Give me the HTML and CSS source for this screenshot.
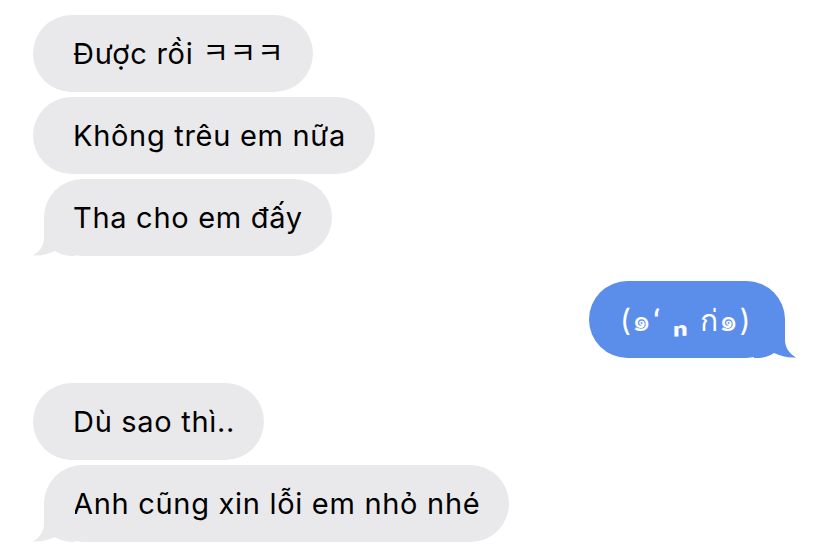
FILE: index.html
```html
<!DOCTYPE html>
<html lang="vi">
<head>
<meta charset="utf-8">
<link rel="stylesheet" href="styles.css">
</head>
<body>
<div class="chat">
  <div class="group in">
    <div class="bubble">Được rồi ㅋㅋㅋ</div>
    <div class="bubble">Không trêu em nữa</div>
    <div class="bubble tail">Tha cho em đấy<svg class="tail-svg" viewBox="0 0 42 40" width="42" height="40"><path d="M11,0 L11,22 C11,30 6,36 0,39.5 C8,40 16,38 22,35 C28,39 34,40 42,40 L42,0 Z"/></svg></div>
  </div>
  <div class="group out">
    <div class="bubble blue tail"><span class="kao">(๑ʻ <span class="mouth">ₙ</span> ก่๑)</span><svg class="tail-svg" viewBox="0 0 42 40" width="42" height="40"><path d="M31,0 L31,22 C31,30 36,36 42,39.5 C34,40 26,38 20,35 C14,39 8,40 0,40 L0,0 Z"/></svg></div>
  </div>
  <div class="group in">
    <div class="bubble">Dù sao thì..</div>
    <div class="bubble tail">Anh cũng xin lỗi em nhỏ nhé<svg class="tail-svg" viewBox="0 0 42 40" width="42" height="40"><path d="M11,0 L11,22 C11,30 6,36 0,39.5 C8,40 16,38 22,35 C28,39 34,40 42,40 L42,0 Z"/></svg></div>
  </div>
</div>
</body>
</html>
```
FILE: styles.css
```css
html, body {
  margin: 0;
  padding: 0;
  background: #ffffff;
}
.chat {
  width: 828px;
  height: 558px;
  box-sizing: border-box;
  padding: 15px 33px 0 33px;
  display: flex;
  flex-direction: column;
  gap: 25px;
  font-family: "Inter", "Noto Sans", "Noto Sans CJK KR", sans-serif;
  font-size: 29px;
  letter-spacing: 0.7px;
  color: #000;
  overflow: hidden;
}
.group {
  display: flex;
  flex-direction: column;
  gap: 5px;
}
.group.in { align-items: flex-start; }
.group.out { align-items: flex-end; }
.bubble {
  position: relative;
  background: #e9e9eb;
  border-radius: 38.5px;
  height: 77px;
  box-sizing: border-box;
  padding: 0 29px 0 40px;
  display: flex;
  align-items: center;
  white-space: nowrap;
  line-height: 33px;
}
.bubble.tail {
  margin-left: 11px;
  padding-left: 29px;
}
.tail-svg {
  position: absolute;
  bottom: 0;
  left: -11px;
  fill: #e9e9eb;
}
.bubble.blue {
  background: #5b8eea;
  color: #ffffff;
  margin-left: 0;
  margin-right: 10px;
  padding: 0 33px 0 31px;
}
.kao {
  letter-spacing: 1.5px;
  font-size: 30px;
}
.mouth {
  font-weight: 700;
  font-size: 34px;
}
.bubble.blue .tail-svg {
  left: auto;
  right: -11px;
  fill: #5b8eea;
}
```
